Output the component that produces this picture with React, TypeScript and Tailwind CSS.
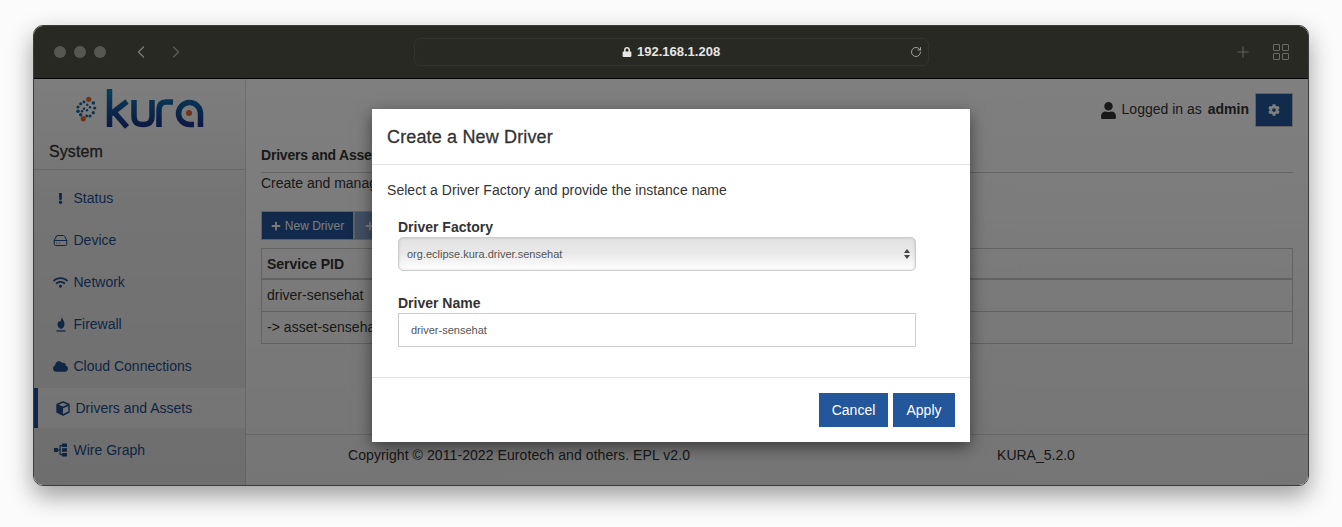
import { ChevronLeft, ChevronRight, HardDrive, Plus, RotateCw } from 'lucide-react';
import { FaCloud, FaCog, FaExclamation, FaLock, FaPlus, FaUser, FaWifi } from 'react-icons/fa';
import type { ReactNode } from 'react';

function KuraLogo() {
  const blue = [
    [19.3, 17, 1.8], [20.7, 22, 1.6], [19.3, 26.7, 1.6], [16, 30, 1.6], [12.7, 30, 1.4],
    [4, 25.3, 1.8], [4, 21, 1.6], [6.7, 17.7, 1.5], [10, 16, 1.4],
    [13.3, 18.7, 1.2], [16, 21.3, 1.2], [10, 22.7, 1.2], [8, 25.3, 1.3], [6.7, 28.7, 1.7], [13, 24.3, 1.2],
  ];
  return (
    <svg width="132" height="44" viewBox="0 0 132 44" className="block ml-[40px] mt-[7px]">
      <defs>
        <linearGradient id="kura" gradientUnits="userSpaceOnUse" x1="0" y1="3" x2="0" y2="41">
          <stop offset="0" stopColor="#0f7fb5" />
          <stop offset="1" stopColor="#1b2f86" />
        </linearGradient>
      </defs>
      {blue.map(([cx, cy, r], i) => (
        <circle key={i} cx={cx} cy={cy} r={r} fill="#1565a8" />
      ))}
      <circle cx="14.7" cy="13.3" r="2.6" fill="#e4672a" />
      <circle cx="9.3" cy="32.7" r="2.6" fill="#e4672a" />
      <g fill="none" stroke="url(#kura)" strokeWidth="5.5">
        <path d="M35.5 3V41" />
        <path d="M37 28L53 15.5" />
        <path d="M40 26L53 41" strokeLinejoin="round" />
        <path d="M60 14V30C60 37 64 38.5 69 38.5C74 38.5 78 37 78 30V14" />
        <path d="M85 41V24C85 18 88 16 92 16H99" />
        <path d="M126.5 41V27A11 11 0 1 0 115.5 38.5H120" />
      </g>
      <circle cx="115" cy="27" r="3" fill="#e4672a" />
    </svg>
  );
}

function FireIcon() {
  return (
    <svg width="12" height="16" viewBox="0 0 12 16" fill="currentColor">
      <path d="M6.5 0.5C7 3 9.5 4.5 9.5 8C9.5 10.5 8 12.3 6 13C4 12.3 2.5 10.5 2.5 8.5C2.5 7 3.5 5.8 4 4.8C4.5 5.3 4.7 5.8 4.8 6.3C6 4.8 6.8 2.5 6.5 0.5Z" />
      <rect x="1.5" y="14.3" width="9" height="1.3" />
    </svg>
  );
}

function CubeIcon() {
  return (
    <svg width="14" height="15" viewBox="0 0 14 15" fill="none" stroke="currentColor" strokeWidth="1.4" strokeLinejoin="round">
      <path d="M7 1L13 3.5V11L7 14L1 11V3.5Z" />
      <path d="M1.5 4L7 6.5L12.5 4" />
      <path d="M1 4.2L7 7V14L1 11Z" fill="currentColor" stroke="none" />
    </svg>
  );
}

function WireIcon() {
  return (
    <svg width="13" height="14" viewBox="0 0 13 14" fill="currentColor">
      <rect x="0" y="5" width="4" height="4" />
      <rect x="4" y="6.4" width="2.5" height="1.2" />
      <rect x="5.5" y="2" width="1.2" height="10" />
      <rect x="8" y="0.5" width="5" height="3.5" />
      <rect x="8" y="5.2" width="5" height="3.5" />
      <rect x="8" y="10" width="5" height="3.5" />
      <rect x="6" y="2" width="2" height="1.2" />
      <rect x="6" y="11" width="2" height="1.2" />
    </svg>
  );
}

const menu: { label: string; icon: ReactNode; active?: boolean }[] = [
  { label: 'Status', icon: <FaExclamation size={11} /> },
  { label: 'Device', icon: <HardDrive size={15} strokeWidth={1.6} /> },
  { label: 'Network', icon: <FaWifi size={15} /> },
  { label: 'Firewall', icon: <FireIcon /> },
  { label: 'Cloud Connections', icon: <FaCloud size={15} /> },
  { label: 'Drivers and Assets', icon: <CubeIcon />, active: true },
  { label: 'Wire Graph', icon: <WireIcon /> },
];

function Sidebar() {
  return (
    <aside className="w-[212px] shrink-0 border-r border-[#dcdcdc] bg-[linear-gradient(#fcfcfc,#efefef_30%,#efefef)]">
      <KuraLogo />
      <div className="mt-[12px] h-[28px] border-b border-[#d5d5d5] pl-[15px] text-[16px] leading-[20px] font-medium tracking-[0.1px] text-[#333] [-webkit-text-stroke:0.3px_#333]">
        System
      </div>
      <nav className="mt-[7px]">
        {menu.map((item) => (
          <div key={item.label} className="h-[42px] py-px text-[14px] text-[#24508f]">
            <div
              className={
                item.active
                  ? 'flex h-full items-center border-l-[4px] border-[#23569b] bg-[#fbfbfb] pl-[18px]'
                  : 'flex h-full items-center pl-[19px]'
              }
            >
              <span className={item.active ? 'flex w-[14px] justify-center' : 'flex w-[15px] justify-center'}>
                {item.icon}
              </span>
              <span className="ml-[5.5px]">{item.label}</span>
            </div>
          </div>
        ))}
      </nav>
    </aside>
  );
}

function MainContent() {
  return (
    <main className="flex min-w-0 flex-1 flex-col bg-white text-[14px] text-[#333]">
      <div className="pl-[15px] pr-[15px]">
        <div className="flex h-[48px] items-start justify-end pt-[14px]">
          <div className="flex h-[34px] items-center">
            <FaUser size={17} className="mr-[5px]" />
            <span className="pb-px">Logged in as</span>
            <span className="ml-[6px] pb-px font-bold">admin</span>
            <div className="ml-[6px] flex h-[34px] w-[38px] items-center justify-center border border-[#c8c8c8] bg-[#23569b] text-white">
              <FaCog size={12} />
            </div>
          </div>
        </div>
        <div className="mt-[18px] h-[28px] border-b border-[#ccc] font-bold leading-[20px] tracking-[-0.2px]">Drivers and Assets</div>
        <p className="leading-[20px]">Create and manage drivers and assets</p>
        <div className="mt-[18px] flex h-[29px] text-[12px] text-white">
          <button className="flex w-[93px] items-center justify-center gap-[4px] border border-[#c8c8c8] bg-[#23569b]">
            <FaPlus size={10} /> New Driver
          </button>
          <button className="flex w-[93px] items-center justify-center gap-[4px] border border-[#c8c8c8] bg-[#86a2cc]">
            <FaPlus size={10} /> New Asset
          </button>
        </div>
        <div className="mt-[8px] border border-[#ccc]">
          <div className="flex h-[31px] items-center border-b-[2px] border-[#ccc] pl-[5px] pt-px font-bold">Service PID</div>
          <div className="flex h-[32px] items-center border-b border-[#ccc] pl-[5px]">driver-sensehat</div>
          <div className="flex h-[31px] items-center pl-[5px] tracking-[0.03px]">-&gt; asset-sensehat</div>
        </div>
      </div>
      <footer className="mt-auto flex h-[51px] items-center border-t border-[#ddd] pb-[10px]">
        <span className="ml-[102px] tracking-[0.08px]">Copyright © 2011-2022 Eurotech and others. EPL v2.0</span>
        <span className="ml-[307px]">KURA_5.2.0</span>
      </footer>
    </main>
  );
}

function NewDriverDialog() {
  return (
    <div className="absolute left-[338px] top-[30px] h-[333px] w-[598px] bg-white text-[14px] text-[#333] shadow-[0_5px_15px_rgba(0,0,0,0.5)]">
      <div className="flex h-[56px] items-center border-b border-[#e5e5e5] px-[15px] pt-[1px] text-[18px] font-medium tracking-[0.15px] [-webkit-text-stroke:0.3px_#333]">
        Create a New Driver
      </div>
      <div className="h-[213px] border-b border-[#e5e5e5] px-[15px] pt-[15px]">
        <p className="leading-[20px] tracking-[0.04px]">Select a Driver Factory and provide the instance name</p>
        <div className="ml-[11px] mt-[17px] w-[518px]">
          <label className="block font-bold leading-[20px]">Driver Factory</label>
          <div className="relative">
            <select className="block h-[34px] w-full appearance-none rounded-[5px] border border-[#ccc] bg-[linear-gradient(#e2e2e2,#e8e8e8_45%,#fff)] pl-[8px] text-[11px] text-[#555] shadow-[inset_0_0_3px_rgba(0,0,0,0.15)]">
              <option>org.eclipse.kura.driver.sensehat</option>
            </select>
            <svg width="6" height="10" viewBox="0 0 6 10" fill="#444" className="absolute right-[6px] top-[12px]">
              <path d="M3 0L6 4H0Z M3 10L0 6H6Z" />
            </svg>
          </div>
          <label className="mt-[22px] block font-bold leading-[20px]">Driver Name</label>
          <input
            readOnly
            value="driver-sensehat"
            className="block h-[34px] w-full border border-[#ccc] bg-white pl-[12px] text-[11px] text-[#555]"
          />
        </div>
      </div>
      <div className="flex justify-end gap-[5px] pr-[15px] pt-[15px]">
        <button className="h-[34px] w-[69px] bg-[#23569b] text-white">Cancel</button>
        <button className="h-[34px] w-[62px] bg-[#23569b] text-white">Apply</button>
      </div>
    </div>
  );
}

export default function App() {
  return (
    <div className="h-[527px] w-[1342px] overflow-hidden bg-[#fbfbfb] pl-[33px] pt-[25px] font-['Liberation_Sans',Arial,sans-serif]">
      <div className="flex h-[461px] w-[1276px] flex-col overflow-hidden rounded-[10px] border border-[#3c3c3a] shadow-[0_10px_24px_rgba(0,0,0,0.38)]">
        <header className="flex h-[53px] shrink-0 items-center border-b border-black bg-[#282923]">
          <div className="ml-[20px] flex gap-[8px]">
            <span className="h-[12px] w-[12px] rounded-full bg-[#565751]" />
            <span className="h-[12px] w-[12px] rounded-full bg-[#565751]" />
            <span className="h-[12px] w-[12px] rounded-full bg-[#565751]" />
          </div>
          <ChevronLeft size={20} strokeWidth={1.5} className="ml-[25px] text-[#7c7d78]" />
          <ChevronRight size={20} strokeWidth={1.5} className="ml-[15px] text-[#5c5d57]" />
          <div className="ml-[228px] flex h-[28px] w-[515px] items-center rounded-[6px] border border-[#33342e] pl-[207px] text-[13px] font-bold text-[#e6e6e4]">
            <FaLock size={10} className="mr-[5px]" />
            <span>192.168.1.208</span>
            <RotateCw size={12} strokeWidth={1.5} className="ml-[190px] text-[#c4c4c2]" />
          </div>
          <Plus size={18} strokeWidth={1.2} className="ml-[305px] text-[#6a6b66]" />
          <div className="ml-[21px] grid grid-cols-2 gap-[2px]">
            <span className="h-[7px] w-[7px] rounded-[1px] border border-[#6a6b66]" />
            <span className="h-[7px] w-[7px] rounded-[1px] border border-[#6a6b66]" />
            <span className="h-[7px] w-[7px] rounded-[1px] border border-[#6a6b66]" />
            <span className="h-[7px] w-[7px] rounded-[1px] border border-[#6a6b66]" />
          </div>
        </header>
        <div className="relative flex min-h-0 flex-1">
          <Sidebar />
          <MainContent />
          <div className="absolute inset-0 bg-[linear-gradient(rgba(0,0,0,0.5),rgba(0,0,0,0.54))]" />
          <NewDriverDialog />
        </div>
      </div>
    </div>
  );
}
